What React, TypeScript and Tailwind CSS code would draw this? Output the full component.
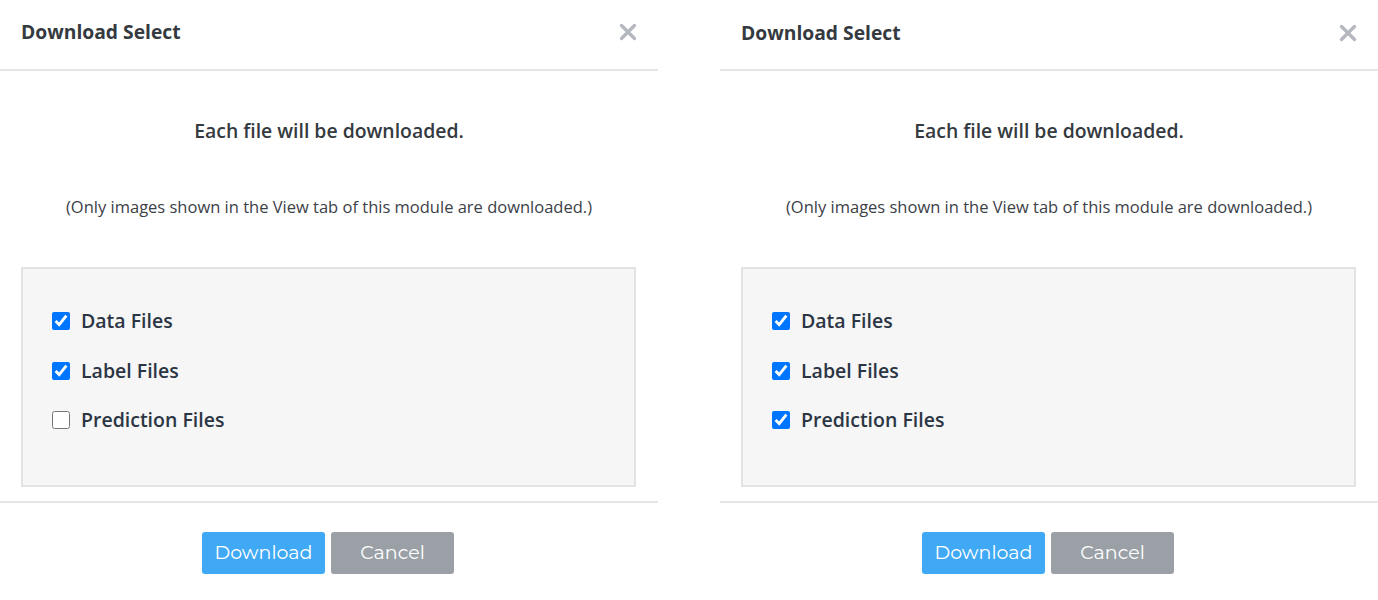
import React, { useState } from 'react';

type Option = { key: string; label: string };

const OPTIONS: Option[] = [
  { key: 'data', label: 'Data Files' },
  { key: 'label', label: 'Label Files' },
  { key: 'prediction', label: 'Prediction Files' },
];

const CloseIcon: React.FC = () => (
  <svg width="20" height="20" viewBox="0 0 20 20" fill="none">
    <path d="M3.5 3.5L16.5 16.5M16.5 3.5L3.5 16.5" stroke="#b5b8bf" strokeWidth="3.4" strokeLinecap="round" />
  </svg>
);

const DownloadDialog: React.FC<{ initial: Record<string, boolean>; offset?: boolean }> = ({ initial, offset }) => {
  const [checked, setChecked] = useState<Record<string, boolean>>(initial);

  return (
    <div className={`w-[658px] flex flex-col bg-white ${offset ? 'pt-[1px]' : ''}`}>
      {/* header */}
      <div className="h-[71px] flex items-center justify-between pl-[21px] pr-[20px] border-b-2 border-[#e4e4e9]">
        <h2 className="mt-[-5px] text-[19.3px] font-bold text-[#343a40] leading-none">Download Select</h2>
        <button className="w-[20px] h-[20px] flex items-center justify-center mt-[-5px]">
          <CloseIcon />
        </button>
      </div>

      {/* body */}
      <div className="flex flex-col">
        <p className="mt-[48px] text-center text-[19.4px] font-semibold text-[#343a40] leading-[24px]">
          Each file will be downloaded.
        </p>
        <p className="mt-[52px] text-center text-[16.5px] text-[#3c4148] leading-[24px]">
          (Only images shown in the View tab of this module are downloaded.)
        </p>
        <div className="mt-[48px] ml-[21px] mr-[22px] h-[220px] bg-[#f6f6f6] border-2 border-[#e3e3e3] pl-[29px] pt-[38px] flex flex-col gap-[21.5px]">
          {OPTIONS.map(o => (
            <label key={o.key} className="flex items-center h-[28px] cursor-pointer">
              <input
                type="checkbox"
                checked={!!checked[o.key]}
                onChange={() => setChecked(prev => ({ ...prev, [o.key]: !prev[o.key] }))}
                className="w-[18px] h-[18px] m-0 accent-[#0075ff] cursor-pointer"
              />
              <span className="ml-[11px] text-[19.5px] font-semibold text-[#2b3544] leading-none">{o.label}</span>
            </label>
          ))}
        </div>
      </div>

      {/* footer */}
      <div className="mt-[14px] border-t-2 border-[#e4e4e9] pt-[29px] pb-[26px] flex justify-center gap-[6px] pr-[2px]">
        <button className="w-[123px] h-[42px] rounded-[3px] bg-[#3fa9f5] text-white text-[19px] font-['Montserrat','DejaVu_Sans',sans-serif]">
          Download
        </button>
        <button className="w-[123px] h-[42px] rounded-[3px] bg-[#9aa0a6] text-white text-[19px] font-['Montserrat','DejaVu_Sans',sans-serif]">
          Cancel
        </button>
      </div>
    </div>
  );
};

const App: React.FC = () => {
  return (
    <div className="w-[1378px] h-[600px] bg-white flex gap-[62px] overflow-hidden font-['Open_Sans',sans-serif]">
      <DownloadDialog initial={{ data: true, label: true, prediction: false }} />
      <DownloadDialog initial={{ data: true, label: true, prediction: true }} offset />
    </div>
  );
};

export default App;
